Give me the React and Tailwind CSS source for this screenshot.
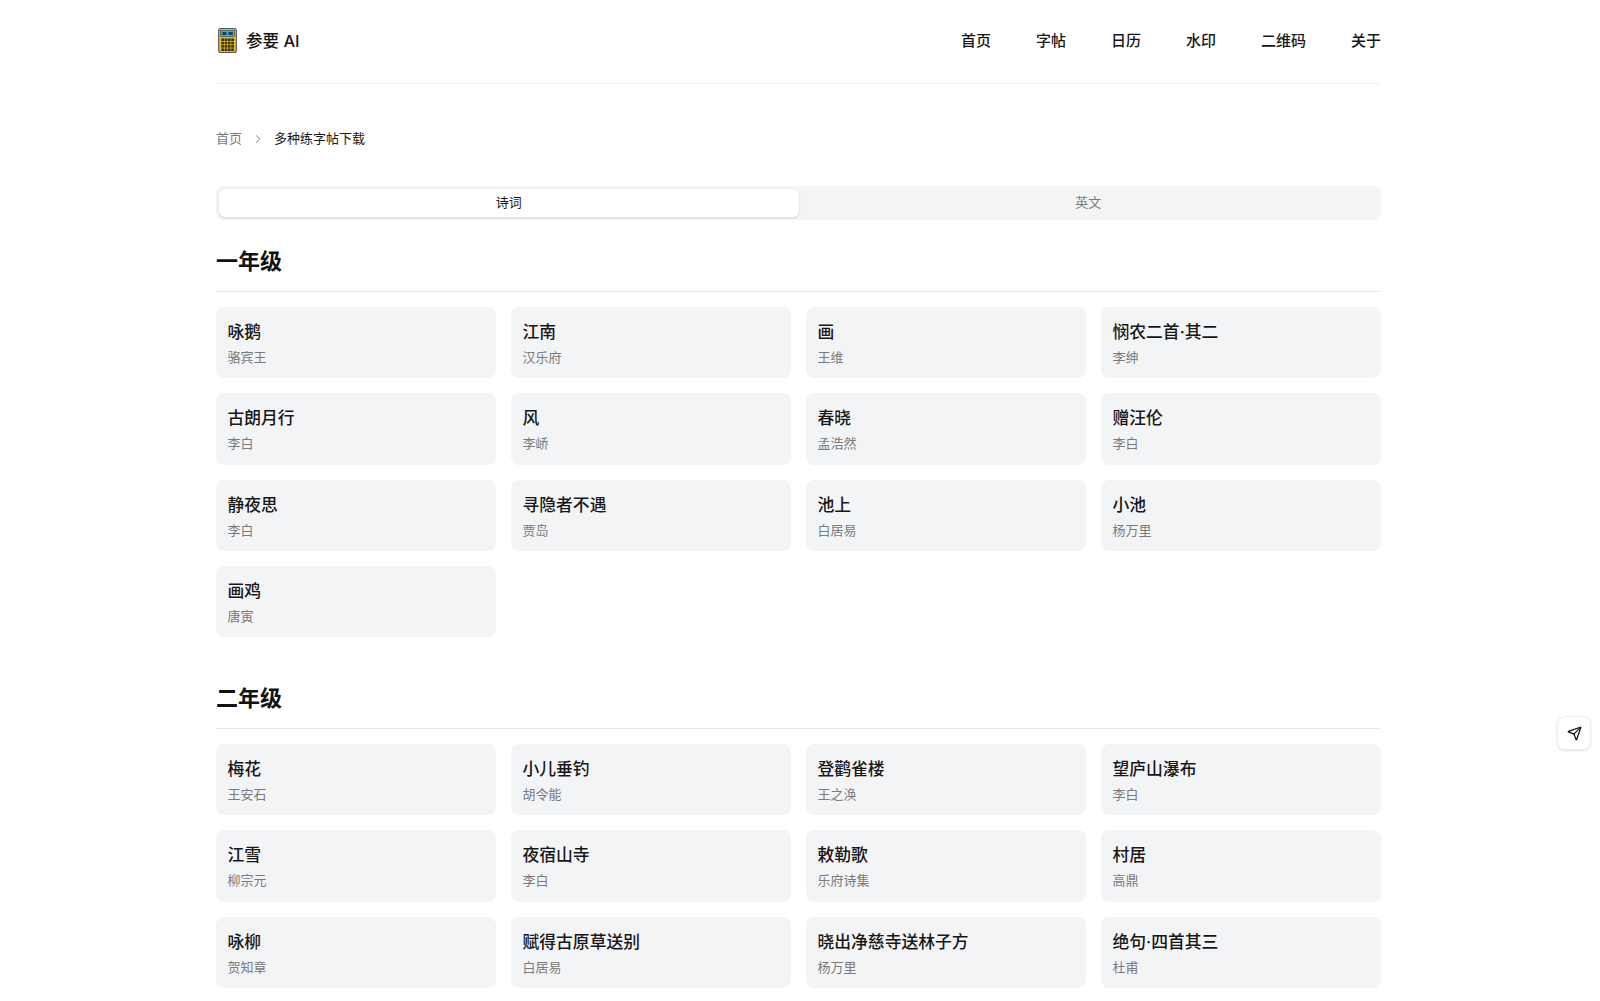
import { Send, ChevronRight } from "lucide-react";

const nav = ["首页", "字帖", "日历", "水印", "二维码", "关于"];

const grades = [
  {
    title: "一年级",
    poems: [
      ["咏鹅", "骆宾王"],
      ["江南", "汉乐府"],
      ["画", "王维"],
      ["悯农二首·其二", "李绅"],
      ["古朗月行", "李白"],
      ["风", "李峤"],
      ["春晓", "孟浩然"],
      ["赠汪伦", "李白"],
      ["静夜思", "李白"],
      ["寻隐者不遇", "贾岛"],
      ["池上", "白居易"],
      ["小池", "杨万里"],
      ["画鸡", "唐寅"],
    ],
  },
  {
    title: "二年级",
    poems: [
      ["梅花", "王安石"],
      ["小儿垂钓", "胡令能"],
      ["登鹳雀楼", "王之涣"],
      ["望庐山瀑布", "李白"],
      ["江雪", "柳宗元"],
      ["夜宿山寺", "李白"],
      ["敕勒歌", "乐府诗集"],
      ["村居", "高鼎"],
      ["咏柳", "贺知章"],
      ["赋得古原草送别", "白居易"],
      ["晓出净慈寺送林子方", "杨万里"],
      ["绝句·四首其三", "杜甫"],
    ],
  },
];

function CalcLogo() {
  const keys = [];
  for (let r = 0; r < 4; r++) {
    for (let c = 0; c < 4; c++) {
      keys.push(<rect key={`${r}-${c}`} x={3 + c * 3.2} y={10 + r * 3.2} width="2.6" height="2.5" fill="#3f3308" />);
    }
  }
  return (
    <svg width="19" height="25" viewBox="0 0 18 24">
      <rect x="0.5" y="0.5" width="17" height="23" rx="2" fill="#e3bb1e" stroke="#54585c" />
      <rect x="2.5" y="2.5" width="13" height="5.5" fill="#3fa9e6" stroke="#1b4f70" strokeWidth="0.6" />
      <rect x="4" y="4" width="4" height="2.5" fill="#12384f" />
      <rect x="10" y="4" width="4" height="2.5" fill="#12384f" />
      {keys}
    </svg>
  );
}

function PoemCard({ title, author }) {
  return (
    <div className="h-[71.3px] rounded-lg bg-[#f3f4f6] px-[11.5px] pt-[13px]">
      <div className="text-[16.8px] leading-[24px] font-medium text-[#171717]">{title}</div>
      <div className="mt-[3px] text-[13px] leading-[20px] text-[#7a7a7a]">{author}</div>
    </div>
  );
}

export default function App() {
  return (
    <div
      className="h-[1001px] overflow-hidden bg-white"
      style={{ fontFamily: 'Inter, "Noto Sans CJK SC", sans-serif' }}
    >
      <div className="ml-[216px] w-[1165px]">
        <header className="flex h-[84px] items-center justify-between border-b border-[#f0f0f0] pb-[2px]">
          <div className="flex items-center gap-[9px] pl-[2px]">
            <CalcLogo />
            <span className="mt-[1px] text-[16.5px] font-medium text-[#171717]">参要 AI</span>
          </div>
          <nav className="mt-[2px] flex gap-[45px] text-[15px] font-medium text-[#171717]">
            {nav.map((n) => (
              <span key={n}>{n}</span>
            ))}
          </nav>
        </header>

        <div className="mt-[45px] flex h-[20px] items-center text-[13px] text-[#7a7a7a]">
          <span>首页</span>
          <ChevronRight className="mx-[9px] h-[14px] w-[14px]" strokeWidth={1.5} />
          <span className="text-[#18181b]">多种练字帖下载</span>
        </div>

        <div className="mt-[37px] flex h-[34px] rounded-lg bg-[#f4f4f5] p-[3px] text-[13px]">
          <div className="flex flex-1 items-center justify-center rounded-md bg-white text-[#18181b] shadow-sm">诗词</div>
          <div className="flex flex-1 items-center justify-center text-[#7a7a7a]">英文</div>
        </div>

        {grades.map((g, i) => (
          <section key={g.title} className={i === 0 ? "mt-[25px]" : "mt-[45px]"}>
            <h2 className="border-b border-[#e5e7eb] pb-[14px] text-[22px] leading-[32px] font-bold text-[#111111]">
              {g.title}
            </h2>
            <div className="mt-[15px] grid grid-cols-4 gap-[15px]">
              {g.poems.map(([t, a]) => (
                <PoemCard key={t} title={t} author={a} />
              ))}
            </div>
          </section>
        ))}
      </div>

      <div className="fixed top-[716px] right-[9px] flex h-[34px] w-[34px] items-center justify-center rounded-lg border border-[#eeeeee] bg-white shadow-sm">
        <Send className="h-[15px] w-[15px] text-[#111111]" strokeWidth={2} />
      </div>
    </div>
  );
}
